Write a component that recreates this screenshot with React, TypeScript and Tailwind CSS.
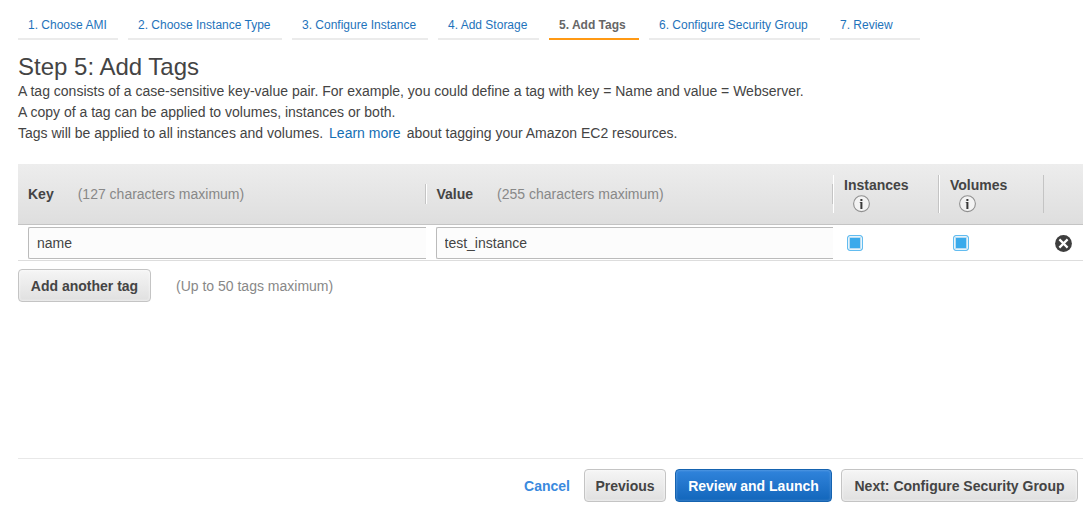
import { useState } from 'react';
import type { ReactNode } from 'react';

const steps = [
  { label: '1. Choose AMI', width: 'min-w-[100px]' },
  { label: '2. Choose Instance Type', width: 'min-w-[154px]' },
  { label: '3. Configure Instance', width: 'min-w-[136px]' },
  { label: '4. Add Storage', width: 'min-w-[101px]' },
  { label: '5. Add Tags', width: 'min-w-[90px]' },
  { label: '6. Configure Security Group', width: 'min-w-[171px]' },
  { label: '7. Review', width: 'min-w-[90px]' },
];
const activeStep = 4;

function InfoIcon() {
  return (
    <svg width="18" height="18" viewBox="0 0 18 18" aria-hidden="true">
      <circle cx="9.5" cy="8.7" r="7.9" fill="#f3f3f3" stroke="#8f8f8f" strokeWidth="1.1" />
      <path d="M8.4 4h2v2h-2zM7.7 7h2.7v7H8.4V7.8h-.7z" fill="#3a3a3a" />
    </svg>
  );
}

function RemoveIcon() {
  return (
    <svg width="18" height="18" viewBox="0 0 18 18" aria-hidden="true">
      <circle cx="9.5" cy="9.5" r="8.4" fill="#3e3e3e" />
      <path d="M5.4 5.4l8.2 8.2M13.6 5.4l-8.2 8.2" stroke="#fff" strokeWidth="2.2" />
    </svg>
  );
}

function Button({ children, width, primary = false }: { children: ReactNode; width: string; primary?: boolean }) {
  return (
    <button
      type="button"
      className={
        width +
        ' ' +
        (primary
          ? 'h-[33px] whitespace-nowrap rounded border border-[#1563b0] bg-linear-to-b from-[#3084dc] to-[#1166bb] px-2.5 font-bold text-white shadow-[inset_0_0_2px_1px_rgba(255,255,255,0.15)]'
          : 'h-[33px] whitespace-nowrap rounded border border-[#c4c4c4] bg-linear-to-b from-[#f5f5f5] to-[#e0e0e0] px-2.5 font-bold text-[#444] shadow-[inset_0_0_2px_1px_rgba(255,255,255,0.4)]')
      }
    >
      {children}
    </button>
  );
}

function TextField({ label, initial }: { label: string; initial: string }) {
  const [value, setValue] = useState(initial);
  return (
    <input
      type="text"
      aria-label={label}
      value={value}
      onChange={(e) => setValue(e.target.value)}
      className="block h-8 w-full rounded-l-xs border border-r-0 border-[#bbb] bg-[#fcfcfc] px-2 text-[#444] outline-none"
    />
  );
}

function Tick({ label }: { label: string }) {
  return (
    <input
      type="checkbox"
      aria-label={label}
      defaultChecked
      className="block size-4 appearance-none rounded-[3px] border border-[#62bcf0] bg-[#e4f1fa] checked:bg-[#3aaaeb] checked:shadow-[inset_0_0_0_1px_#e6f4fc,inset_0_0_0_2px_#b9ddf2]"
    />
  );
}

export default function App() {
  return (
    <div className="flex min-h-screen flex-col bg-white pt-2.5 pr-2 pb-[11px] pl-[18px] font-['Liberation_Sans',Arial,sans-serif] text-sm text-[#444]">
      <nav aria-label="Wizard steps">
        <ol className="flex flex-wrap gap-2.5 text-xs">
          {steps.map(({ label, width }, i) => (
            <li
              key={label}
              className={
                width +
                ' ' +
                (i === activeStep
                  ? 'h-[30px] border-b-2 border-[#ff9914] px-2.5 leading-[30px] font-bold text-[#666]'
                  : 'h-[30px] border-b-2 border-[#ebebeb] px-2.5 leading-[30px] text-[#1e73bb]')
              }
            >
              {i === activeStep ? <span aria-current="step">{label}</span> : <a href="#step">{label}</a>}
            </li>
          ))}
        </ol>
      </nav>

      <main>
        <h1 className="mt-3 text-2xl leading-[29px]">Step 5: Add Tags</h1>
        <div className="leading-[21px]">
          <p>
            A tag consists of a case-sensitive key-value pair. For example, you could define a tag with key = Name and
            value = Webserver.
          </p>
          <p>A copy of a tag can be applied to volumes, instances or both.</p>
          <p>
            Tags will be applied to all instances and volumes.
            <a href="#learn" className="mx-1.5 text-[#146eb4]">
              Learn more
            </a>
            about tagging your Amazon EC2 resources.
          </p>
        </div>

        <table className="mt-5 w-full table-fixed border-separate border-spacing-0 text-left">
          <colgroup>
            <col />
            <col />
            <col className="w-[106px]" />
            <col className="w-[105px]" />
            <col className="w-[39px]" />
          </colgroup>
          <thead>
            <tr className="h-[61px] bg-linear-to-b from-[#ededed] to-[#dedede]">
              <th scope="col" className="border-b border-[#c4c4c4] p-0">
                <div className="h-5 border-r border-[#c4c4c4] pl-2.5">
                  Key<span className="ml-6 font-normal text-[#888]">(127 characters maximum)</span>
                </div>
              </th>
              <th scope="col" className="border-b border-[#c4c4c4] p-0">
                <div className="h-5 border-r border-l border-r-[#c4c4c4] border-l-white pl-2.5">
                  Value<span className="ml-6 font-normal text-[#888]">(255 characters maximum)</span>
                </div>
              </th>
              <th scope="col" className="border-b border-[#c4c4c4] p-0">
                <div className="h-[38px] border-r border-l border-r-[#c4c4c4] border-l-white pl-2.5">
                  Instances
                  <div className="pl-2">
                    <InfoIcon />
                  </div>
                </div>
              </th>
              <th scope="col" className="border-b border-[#c4c4c4] p-0">
                <div className="h-[38px] border-r border-l border-r-[#c4c4c4] border-l-white pl-2.5">
                  Volumes
                  <div className="pl-2">
                    <InfoIcon />
                  </div>
                </div>
              </th>
              <td className="border-b border-[#c4c4c4] p-0" />
            </tr>
          </thead>
          <tbody>
            <tr className="h-9">
              <td className="border-b border-[#ddd] p-0 pl-2.5">
                <TextField label="Key" initial="name" />
              </td>
              <td className="border-b border-[#ddd] p-0 pl-2.5">
                <TextField label="Value" initial="test_instance" />
              </td>
              <td className="border-b border-[#ddd] p-0 pl-3.5">
                <Tick label="Apply to instances" />
              </td>
              <td className="border-b border-[#ddd] p-0 pl-3.5">
                <Tick label="Apply to volumes" />
              </td>
              <td className="border-b border-[#ddd] p-0 pl-2.5">
                <button type="button" aria-label="Remove tag" className="block">
                  <RemoveIcon />
                </button>
              </td>
            </tr>
          </tbody>
        </table>

        <div className="mt-2 flex items-center gap-[25px]">
          <Button width="min-w-[133px]">Add another tag</Button>
          <span className="text-[#888]">(Up to 50 tags maximum)</span>
        </div>
      </main>

      <footer className="mt-auto flex items-center justify-end gap-[9px] border-t border-[#e8e8e8] pt-2.5 pr-[5px]">
        <a href="#cancel" className="mr-[5px] font-bold text-[#3a8ade]">
          Cancel
        </a>
        <Button width="min-w-[82px]">Previous</Button>
        <Button width="min-w-[157px]" primary>
          Review and Launch
        </Button>
        <Button width="min-w-[237px]">Next: Configure Security Group</Button>
      </footer>
    </div>
  );
}
